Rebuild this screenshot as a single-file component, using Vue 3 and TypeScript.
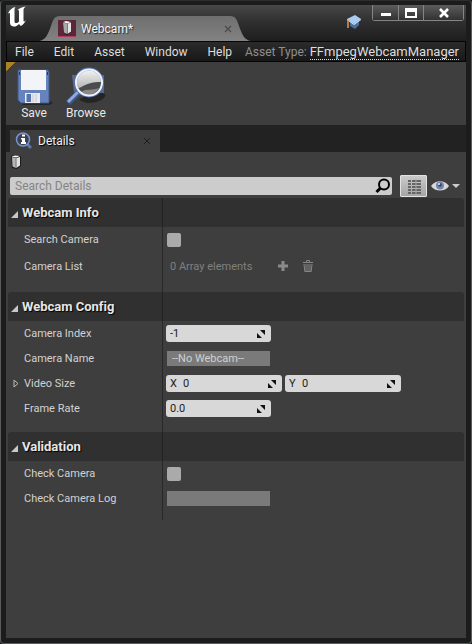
<script setup lang="ts">
import { ref } from 'vue'

interface NumberField {
  name: string
  prefix: string
  value: string
}
interface Row {
  label: string
  kind: 'check' | 'array' | 'number' | 'text'
  expandable?: boolean
  fields?: NumberField[]
  text?: string
}
interface Section {
  title: string
  rows: Row[]
}

const menus = ['File', 'Edit', 'Asset', 'Window', 'Help']
const search = ref('')
const sections = ref<Section[]>([
  {
    title: 'Webcam Info',
    rows: [
      { label: 'Search Camera', kind: 'check' },
      { label: 'Camera List', kind: 'array', text: '0 Array elements' },
    ],
  },
  {
    title: 'Webcam Config',
    rows: [
      { label: 'Camera Index', kind: 'number', fields: [{ name: 'Camera Index', prefix: '', value: '-1' }] },
      { label: 'Camera Name', kind: 'text', text: '--No Webcam--' },
      {
        label: 'Video Size',
        kind: 'number',
        expandable: true,
        fields: [
          { name: 'Video Size X', prefix: 'X', value: '0' },
          { name: 'Video Size Y', prefix: 'Y', value: '0' },
        ],
      },
      { label: 'Frame Rate', kind: 'number', fields: [{ name: 'Frame Rate', prefix: '', value: '0.0' }] },
    ],
  },
  {
    title: 'Validation',
    rows: [
      { label: 'Check Camera', kind: 'check' },
      { label: 'Check Camera Log', kind: 'text', text: '' },
    ],
  },
])

const idOf = (label: string): string => label.toLowerCase().replace(/ /g, '-')
</script>

<template>
  <div class="window">
    <header class="titlebar">
      <svg class="logo" viewBox="0 0 20 22" aria-hidden="true">
        <path
          d="M1 7.5C2.5 4 5 1.500 8.500 1C7.700 2 7.500 2.700 7.500 4V15.200C7.500 16.500 8.300 17 9.300 17C10.500 17 11.500 16.300 12 15.500V5C12 4.200 11.500 3.800 10.500 4C12.500 2 15.300 1 19 .5C17.500 1.500 16.500 2.500 16.500 4V14.500C16.500 15.700 17.200 15.800 19 14.200C17.500 17.300 15.500 19 13.700 20L12 18C10.600 19.800 8.500 20.800 6.500 20.500C4 20.200 3 18.500 3 16.500V8.300C3 6.700 2.300 6.500 1 7.500Z"
          fill="#fff"
        />
      </svg>
      <div class="tab">
        <svg class="tab-shape" viewBox="0 0 212 25" preserveAspectRatio="none" aria-hidden="true">
          <defs>
            <linearGradient id="tab-fill" x1="0" y1="0" x2="0" y2="1">
              <stop offset="0" stop-color="#6f6f6f" />
              <stop offset="1" stop-color="#828282" />
            </linearGradient>
          </defs>
          <path d="M0 25C7 24 9 18 12 10C14 4 15 0 21 0H191C197 0 198 4 200 10C203 18 205 24 212 25Z" fill="url(#tab-fill)" />
        </svg>
        <svg class="tab-icon" viewBox="0 0 18 17" aria-hidden="true">
          <rect width="18" height="17" fill="#5a2638" />
          <rect y="16" width="18" height="1" fill="#b23a63" />
          <path d="M5 2L8 1L13 2V12L9 15L6 13Z" fill="#1d1518" />
          <path d="M5 2L8 1L13 2L9 3.500Z" fill="#fff" />
          <path d="M5 2.500L9 3.500V14L6 12.500Z" fill="#a9a9a9" />
          <path d="M9.500 3.500L13 2.500V11.500L9.500 14Z" fill="#e4e4e4" />
        </svg>
        <span class="tab-name">Webcam*</span>
        <button class="close" aria-label="Close tab">
          <svg viewBox="0 0 8 8"><path d="M1 1L7 7M7 1L1 7" stroke="#494949" stroke-width="1.200" /></svg>
        </button>
      </div>
      <button class="tutorial" aria-label="Tutorials">
        <svg viewBox="0 0 16 16">
          <path d="M4 7V12L9 15L13 11V6Z" fill="#4d6f9b" />
          <path d="M1 5L9 1L15 5L8 10Z" fill="#a9cdf0" />
          <path d="M1 5L8 10L15 5V6L8 11L1 6Z" fill="#dcecfb" />
          <path d="M2 6V14" stroke="#d79b60" stroke-width="1.500" />
        </svg>
      </button>
      <div class="controls">
        <button aria-label="Minimize">
          <svg viewBox="0 0 14 12"><path d="M2 6H12V9H2Z" fill="#fff" /></svg>
        </button>
        <button aria-label="Maximize">
          <svg viewBox="0 0 14 12"><path d="M1 1H13V11H1ZM3 5V9H11V5Z" fill="#fff" fill-rule="evenodd" /></svg>
        </button>
        <button class="wide" aria-label="Close">
          <svg viewBox="0 0 14 12"><path d="M3 2L11 10M11 2L3 10" stroke="#fff" stroke-width="2.600" /></svg>
        </button>
      </div>
    </header>

    <div class="menubar">
      <nav class="menus">
        <button v-for="m in menus" :key="m">{{ m }}</button>
      </nav>
      <span class="asset">Asset Type: <a href="#">FFmpegWebcamManager</a></span>
    </div>

    <div class="toolbar">
      <button>
        <svg viewBox="0 0 38 38" aria-hidden="true">
          <path d="M6 35L33 33L38 36L34 38H8Z" fill="#252525" />
          <path d="M3 3H33L34 5V36H6L3 33Z" fill="#6683bd" stroke="#40588c" />
          <path d="M6 3H31V23H6Z" fill="#f3f4f8" />
          <path d="M10 26H25V36H10Z" fill="#e8eaf0" />
          <path d="M11.500 27H16V35H11.500Z" fill="#5674ae" />
          <path d="M18 27V35M21 27V35" stroke="#c4c8d2" />
          <path d="M4 5H5V8H4ZM32 5H33V8H32Z" fill="#273960" />
        </svg>
        <span>Save</span>
      </button>
      <button>
        <svg viewBox="0 0 42 38" aria-hidden="true">
          <defs>
            <linearGradient id="lens" x1="0" y1="0" x2="0" y2="1">
              <stop offset="0" stop-color="#f6f6f6" />
              <stop offset="1" stop-color="#9b9b9b" />
            </linearGradient>
          </defs>
          <path d="M14 33C18 29 34 24 40 27C42 31 34 36 22 36Z" fill="#252525" />
          <path d="M7 8H39V26H9Z" fill="#596a8c" />
          <path d="M3 36L14 25" stroke="#3e5688" stroke-width="6" />
          <path d="M3 35L14 24" stroke="#90a9dd" stroke-width="3" />
          <circle cx="24" cy="15.500" r="13.500" fill="url(#lens)" stroke="#5573ae" stroke-width="3" />
          <path d="M12 21C19 21 19 15 36 15C37 22 31 28 24 28C18 28 14 25 12 21Z" fill="#4c4c4c" />
          <path d="M16 25C22 21 28 24 34 21C30 28 21 30 16 25Z" fill="#888" />
          <circle cx="24" cy="15.500" r="13" fill="none" stroke="#eef2fb" stroke-width="2" />
        </svg>
        <span>Browse</span>
      </button>
    </div>

    <div class="panel-tabs">
      <div class="panel-tab">
        <svg class="info" viewBox="0 0 18 18" aria-hidden="true">
          <path d="M11 11L16 16" stroke="#5876b8" stroke-width="3" />
          <circle cx="8" cy="7.500" r="6.500" fill="#3b414e" stroke="#7894cd" stroke-width="1.500" />
          <path d="M7 2.500H10V4.500H7ZM6 6H10V10H11V12H6V10H7V7.500H6Z" fill="#fff" />
        </svg>
        <span>Details</span>
        <button class="close" aria-label="Close Details">
          <svg viewBox="0 0 8 8"><path d="M1 1L7 7M7 1L1 7" stroke="#1d1d1d" /></svg>
        </button>
      </div>
    </div>

    <main class="panel">
      <svg class="actor" viewBox="0 0 10 14" aria-hidden="true">
        <path d="M0 1L4 0L10 1V11L6 14L1 13Z" fill="#1c1c1c" />
        <path d="M.5 1.500L4 .5L9 1L5 2.500Z" fill="#fff" />
        <path d="M1 2L4.800 3V13L1.500 11.500Z" fill="#b5b5b5" />
        <path d="M5.300 3L9 2V10.500L5.300 13Z" fill="#e2e2e2" />
      </svg>
      <div class="search-row">
        <div class="search">
          <input v-model="search" type="text" placeholder="Search Details" aria-label="Search Details" />
          <svg viewBox="0 0 16 16" aria-hidden="true">
            <circle cx="9" cy="6.500" r="5" fill="none" stroke="#000" stroke-width="2" />
            <path d="M5.500 10L1.500 14" stroke="#000" stroke-width="3" />
          </svg>
        </div>
        <button class="grid-btn" aria-label="Property matrix">
          <svg viewBox="0 0 14 15">
            <path
              d="M1 1H4V3H1ZM5 1H14V3H5ZM1 4H4V6H1ZM5 4H14V6H5ZM1 7H4V9H1ZM5 7H14V9H5ZM1 10H4V12H1ZM5 10H14V12H5ZM1 13H4V15H1ZM5 13H14V15H5Z"
              fill="#666"
            />
            <path d="M9 0V15" stroke="#aaa" />
          </svg>
        </button>
        <button class="eye-btn" aria-label="View options">
          <svg viewBox="0 0 30 12">
            <path d="M0 6C4-.5 14-.5 18 6C14 12 4 12 0 6Z" fill="#d7d7dc" />
            <circle cx="9" cy="5.500" r="4" fill="#7484a8" />
            <circle cx="9" cy="5" r="1.800" fill="#36466e" />
            <circle cx="8" cy="4" r="1" fill="#eef" />
            <path d="M21 4H29L25 8Z" fill="#ccc" />
          </svg>
        </button>
      </div>

      <section v-for="s in sections" :key="s.title" class="group">
        <h2>
          <span class="name-cell">
            <svg viewBox="0 0 8 8" aria-hidden="true"><path d="M8 0V8H0Z" fill="#c8c8c8" /></svg>
            {{ s.title }}
          </span>
        </h2>
        <div v-for="r in s.rows" :key="r.label" class="row">
          <div class="name-cell">
            <button v-if="r.expandable" class="expander" aria-label="Expand Video Size">
              <svg viewBox="0 0 6 9"><path d="M1 1L5 4.500L1 8Z" fill="none" stroke="#bbb" /></svg>
            </button>
            <span v-if="r.kind === 'array'">{{ r.label }}</span>
            <label v-else :for="idOf(r.label)">{{ r.label }}</label>
          </div>
          <div class="value-cell">
            <input v-if="r.kind === 'check'" :id="idOf(r.label)" type="checkbox" />
            <template v-else-if="r.kind === 'array'">
              <span class="count">{{ r.text }}</span>
              <button class="array-btn" aria-label="Add element">
                <svg viewBox="0 0 12 12"><path d="M4.500 1H7.500V4.500H11V7.500H7.500V11H4.500V7.500H1V4.500H4.500Z" fill="#8a8a8a" /></svg>
              </button>
              <button class="array-btn" aria-label="Remove all elements">
                <svg viewBox="0 0 12 12">
                  <path d="M1 2.500H11M4.500 2V.5H7.500V2M2 4L2.800 11.500H9.200L10 4" fill="none" stroke="#858585" />
                  <path d="M4 4V11M6 4V11M8 4V11" stroke="#858585" />
                </svg>
              </button>
            </template>
            <input v-else-if="r.kind === 'text'" :id="idOf(r.label)" class="readonly" type="text" readonly :value="r.text" />
            <template v-else>
              <div v-for="(f, i) in r.fields" :key="f.name" class="spin" :class="{ vector: f.prefix }">
                <span v-if="f.prefix">{{ f.prefix }}</span>
                <input :id="i === 0 ? idOf(r.label) : idOf(f.name)" v-model="f.value" type="text" :aria-label="f.name" />
                <svg viewBox="0 0 8 8" aria-hidden="true">
                  <path d="M3 0H8V5ZM0 3L5 8H0Z" fill="#111" />
                </svg>
              </div>
            </template>
          </div>
        </div>
      </section>
    </main>
  </div>
</template>

<style>
body {
  background: #1c1c1c;
}
</style>

<style scoped>
* {
  box-sizing: border-box;
}
.window {
  display: flex;
  flex-direction: column;
  min-height: 100vh;
  padding: 4px 5px 5px;
  border: 1px solid #5a5d5d;
  border-top-color: #2b2e2e;
  border-radius: 4px;
  background: #1c1c1c;
  color: #d2d2d2;
  font: 11px/16px Roboto, sans-serif;
  font-variant-ligatures: none;
}
button {
  padding: 0;
  border: 0;
  background: none;
  color: inherit;
  font: inherit;
}
svg {
  display: block;
}
.titlebar {
  display: flex;
  align-items: flex-start;
  height: 36px;
  background: linear-gradient(#484848, #303030 45%, #1e1e1e);
}
.logo {
  width: 20px;
  height: 22px;
  margin: 1px 0 0 1px;
}
.tab {
  position: relative;
  display: flex;
  align-items: center;
  width: 212px;
  height: 25px;
  margin: 11px 0 0 12px;
  padding: 0 19px;
  color: #f4f4f4;
  font-size: 12px;
  text-shadow: 1px 1px 1px #222;
}
.tab-shape {
  position: absolute;
  inset: 0;
  width: 100%;
  height: 100%;
}
.tab-icon {
  position: relative;
  width: 18px;
  height: 17px;
}
.tab-name {
  position: relative;
  flex: 1;
  padding-left: 5px;
}
.close {
  position: relative;
}
.close svg {
  width: 8px;
  height: 8px;
}
.tutorial {
  margin: 9px 0 0 auto;
}
.tutorial svg {
  width: 16px;
  height: 16px;
}
.controls {
  display: flex;
  margin: 0 2px 0 10px;
  border: 1px solid #858585;
  border-top: 0;
  border-radius: 0 0 3px 3px;
}
.controls button {
  display: grid;
  place-items: center;
  width: 25px;
  height: 15px;
  background: linear-gradient(#5c5c5c, #323232);
}
.controls button + button {
  border-left: 1px solid #858585;
}
.controls .wide {
  width: 40px;
}
.controls svg {
  width: 14px;
  height: 12px;
}
.menubar {
  display: flex;
  align-items: center;
  justify-content: space-between;
  height: 21px;
  padding: 0 6px 0 8px;
  border: 1px solid #050505;
  background: linear-gradient(#2b2b2b, #181818);
  color: #dedede;
  font-size: 12px;
  white-space: nowrap;
}
.menus {
  display: flex;
  gap: 20px;
}
.asset {
  color: #8f8f8f;
}
.asset a {
  border-bottom: 1px dotted #ddd;
  color: #dedede;
  font-size: 13px;
  line-height: 14px;
  text-decoration: none;
}
.toolbar {
  display: flex;
  gap: 12px;
  height: 63px;
  padding: 5px 9px 0;
  background: linear-gradient(135deg, #a98229 7px, #3e3e3e 7px);
  color: #e8e8e8;
  font-size: 12px;
  text-shadow: 1px 1px 1px #000;
}
.toolbar button {
  display: flex;
  flex-direction: column;
  align-items: center;
}
.toolbar svg {
  height: 38px;
}
.panel-tabs {
  padding-top: 5px;
  background: #222;
}
.panel-tab {
  display: flex;
  align-items: center;
  gap: 5px;
  width: 150px;
  height: 22px;
  margin-left: 4px;
  padding: 0 9px 0 5px;
  background: #3e3e3e;
  color: #f0f0f0;
  font-size: 12px;
  text-shadow: 1px 1px 1px #000;
}
.panel-tab .close {
  margin-left: auto;
}
.info {
  width: 18px;
  height: 18px;
}
.panel {
  flex: 1;
  padding: 3px 2px 0;
  background: #3e3e3e;
}
.actor {
  width: 10px;
  height: 14px;
  margin-left: 3px;
}
.search-row {
  display: flex;
  align-items: center;
  height: 22px;
  margin: 6px 3px 1px 2px;
}
.search {
  display: flex;
  align-items: center;
  flex: 1;
  height: 18px;
  padding: 0 1px 0 5px;
  border-radius: 2px;
  background: #ccc;
}
.search input {
  flex: 1;
  min-width: 0;
  padding: 0;
  border: 0;
  background: none;
  color: #222;
  font: 12px/16px Roboto, sans-serif;
  outline: 0;
}
.search input::placeholder {
  color: #858585;
}
.search svg {
  width: 16px;
  height: 16px;
}
.grid-btn {
  display: grid;
  place-items: center;
  width: 27px;
  height: 22px;
  margin: 0 4px 0 8px;
  border: 1px solid #e2e2e2;
  border-radius: 1px;
  background: linear-gradient(#cacaca, #a5a5a5);
}
.grid-btn svg {
  width: 14px;
  height: 15px;
}
.eye-btn svg {
  width: 30px;
  height: 12px;
}
.group {
  padding-bottom: 11px;
  background: linear-gradient(#282828, #282828) 154px 0 / 1px 100% no-repeat;
}
.group:last-child {
  padding-bottom: 9px;
}
h2 {
  display: flex;
  height: 29px;
  margin: 0;
  border-radius: 3px 3px 0 0;
  background: linear-gradient(#222, #222) 154px 0 / 1px 100% no-repeat #303030;
  color: #e6e6e6;
  font-size: 13px;
  font-weight: 700;
  text-shadow: 1px 1px 1px #000;
}
h2 .name-cell {
  gap: 4px;
  padding-left: 3px;
}
h2 svg {
  width: 7px;
  height: 7px;
  margin-top: 3px;
}
.row {
  display: flex;
  min-height: 25px;
}
.name-cell {
  position: relative;
  display: flex;
  align-items: center;
  width: 158px;
  padding-left: 16px;
}
.expander {
  position: absolute;
  left: 5px;
}
.expander svg {
  width: 6px;
  height: 9px;
}
.value-cell {
  display: flex;
  align-items: center;
  flex: 1;
  gap: 3px;
}
input[type='checkbox'] {
  width: 14px;
  height: 14px;
  margin: 0 1px;
  border-radius: 2px;
  background: #aaa;
  appearance: none;
}
input[type='checkbox']:checked {
  background: #e08a1e;
}
.count {
  width: 103px;
  padding-left: 4px;
  color: #808080;
}
.array-btn {
  padding: 8px 5px 9px;
}
.array-btn svg {
  width: 12px;
  height: 12px;
}
.readonly {
  width: 103px;
  height: 15px;
  margin-left: 1px;
  padding: 0 5px;
  border: 0;
  background: #7a7a7a;
  color: #d0d0d0;
  font: inherit;
  font-variant-ligatures: none;
  outline: 0;
}
.spin {
  display: flex;
  align-items: center;
  width: 105px;
  height: 17px;
  padding: 0 6px 0 4px;
  border-radius: 3px;
  background: #d8d8d8;
  color: #1c1c1c;
}
.spin.vector {
  width: 116px;
}
.spin span {
  width: 13px;
}
.spin input {
  flex: 1;
  min-width: 0;
  padding: 0;
  border: 0;
  background: none;
  color: inherit;
  font: inherit;
  outline: 0;
}
.spin svg {
  width: 8px;
  height: 8px;
}
</style>
